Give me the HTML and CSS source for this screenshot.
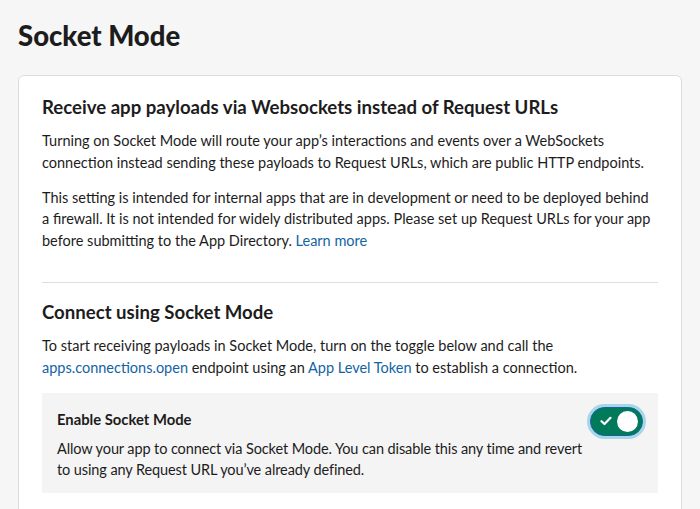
FILE: index.html
```html
<!DOCTYPE html>
<html lang="en">
<head>
    <meta charset="UTF-8">
    <title>Socket Mode</title>
    <link rel="stylesheet" href="styles.css">
</head>
<body>
    <div class="page">
        <h1 class="page-title">Socket Mode</h1>
        <div class="card">
            <section class="section">
                <h2>Receive app payloads via Websockets instead of Request URLs</h2>
                <p>Turning on Socket Mode will route your app’s interactions and events over a WebSockets connection instead sending these payloads to Request URLs, which are public HTTP endpoints.</p>
                <p>This setting is intended for internal apps that are in development or need to be deployed behind a firewall. It is not intended for widely distributed apps. Please set up Request URLs for your app before submitting to the App Directory. <a href="#">Learn more</a></p>
            </section>
            <hr class="divider">
            <section class="section">
                <h2>Connect using Socket Mode</h2>
                <p>To start receiving payloads in Socket Mode, turn on the toggle below and call the <a href="#">apps.connections.open</a> endpoint using an <a href="#">App Level Token</a> to establish a connection.</p>
                <div class="setting">
                    <div class="setting-text">
                        <h3>Enable Socket Mode</h3>
                        <p>Allow your app to connect via Socket Mode. You can disable this any time and revert to using any Request URL you’ve already defined.</p>
                    </div>
                    <button class="toggle on" aria-pressed="true">
                        <svg class="check" width="12" height="10" viewBox="0 0 12 10">
                            <path d="M1.5 5.2 L4.5 8 L10.5 1.8" fill="none" stroke="#fff" stroke-width="2.2" stroke-linecap="round" stroke-linejoin="round"/>
                        </svg>
                        <span class="knob"></span>
                    </button>
                </div>
            </section>
        </div>
    </div>
</body>
</html>
```

FILE: styles.css
```css
body {
    margin: 0;
    background: #f6f6f6;
    color: #1d1c1d;
    font-family: Lato, "Noto Sans", sans-serif;
}
.page {
    padding: 20px 18px 0 18px;
}
.page-title {
    margin: 0 0 23px 0;
    font-size: 27.5px;
    font-weight: 900;
    line-height: 32px;
}
.card {
    background: #fff;
    border: 1px solid #dddddd;
    border-radius: 6px;
    padding: 19px 23px 24px 23px;
    height: 480px;
}
.section h2 {
    margin: 0 0 11px 0;
    font-size: 18.6px;
    font-weight: 700;
    line-height: 24px;
}
.section p {
    margin: 0 0 13px 0;
    font-size: 14.5px;
    line-height: 21.8px;
}
a {
    color: #1264a3;
    text-decoration: none;
}
.divider {
    border: 0;
    border-top: 1px solid #dddddd;
    margin: 30px 0 17px 0;
}
.setting {
    display: flex;
    justify-content: space-between;
    align-items: flex-start;
    background: #f4f4f4;
    padding: 16px 15px 13px 15px;
    margin-top: 14px;
}
.setting-text {
    flex: 1;
}
.setting-text h3 {
    margin: 0 0 9px 0;
    font-size: 14.8px;
    font-weight: 700;
    line-height: 20px;
}
.setting .setting-text p {
    margin: 0;
    font-size: 14.5px;
    line-height: 21px;
    letter-spacing: -0.1px;
}
.toggle {
    position: relative;
    flex: none;
    width: 53px;
    height: 29px;
    margin-top: -2px;
    padding: 0;
    border: 1px solid #1264a3;
    border-radius: 15px;
    background: #007a5a;
    box-shadow: 0 0 0 3px rgba(29, 155, 209, 0.35);
    display: flex;
    align-items: center;
    cursor: pointer;
}
.toggle .check {
    margin-left: 9px;
}
.toggle .knob {
    position: absolute;
    right: 4px;
    top: 3px;
    width: 21px;
    height: 21px;
    border-radius: 50%;
    background: #fff;
}
```
